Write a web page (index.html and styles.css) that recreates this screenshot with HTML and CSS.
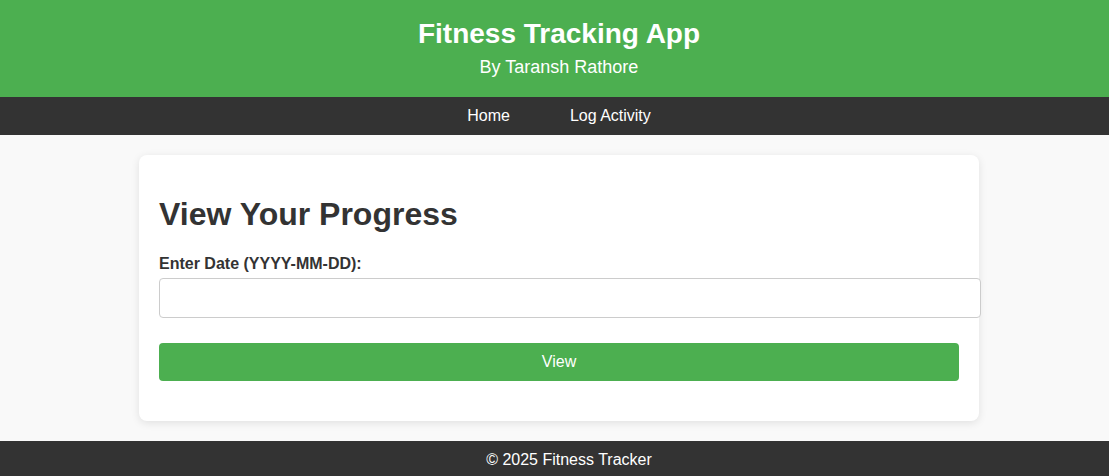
FILE: index.html
```html
<!DOCTYPE html>
<html>
<head>
<meta charset="utf-8">
<title>Fitness Tracking App</title>
<link rel="stylesheet" href="styles.css">
</head>
<body>
<header class="site-header">
  <h1 class="site-title">Fitness Tracking App</h1>
  <p class="site-sub">By Taransh Rathore</p>
</header>
<nav class="site-nav">
  <a href="#" class="nav-link">Home</a>
  <a href="#" class="nav-link">Log Activity</a>
</nav>
<main class="container">
  <h2 class="card-title">View Your Progress</h2>
  <form class="form">
    <label class="form-label" for="date">Enter Date (YYYY-MM-DD):</label>
    <input class="form-input" id="date" type="text">
    <button class="form-btn" type="button">View</button>
  </form>
</main>
<footer class="site-footer">&copy; 2025 Fitness Tracker</footer>
</body>
</html>
```
FILE: styles.css
```css
html {
  overflow-x: hidden;
}
html, body {
  margin: 0;
  padding: 0;
}
body {
  min-width: 1118px;
  font-family: "Liberation Sans", Arial, sans-serif;
  background: #f9f9f9;
  color: #333;
}
.site-header {
  background: #4caf50;
  color: #fff;
  text-align: center;
  padding: 18px 20px 19px;
}
.site-title {
  margin: 0;
  font-size: 28px;
  font-weight: bold;
}
.site-sub {
  margin: 7px 0 0;
  font-size: 18px;
}
.site-nav {
  background: #333;
  display: flex;
  justify-content: center;
  gap: 60px;
  padding: 10px 0;
}
.nav-link {
  color: #fff;
  text-decoration: none;
  font-size: 16px;
}
.container {
  width: 800px;
  margin: 20px auto;
  padding: 20px;
  background: #fff;
  border-radius: 8px;
  box-shadow: 0 2px 8px rgba(0,0,0,0.1);
}
.card-title {
  font-size: 32px;
  margin: 21px 0 22px;
  color: #333;
}
.form {
  display: flex;
  flex-direction: column;
  align-items: flex-start;
}
.form-label {
  font-weight: bold;
  font-size: 16px;
  margin-bottom: 5px;
}
.form-input {
  width: 100%;
  padding: 10px;
  font-size: 16px;
  border: 1px solid #ccc;
  border-radius: 4px;
  margin: 0 0 25px;
  font-family: inherit;
  box-sizing: content-box;
  height: 18px;
}
.form-btn {
  width: 100%;
  background: #4caf50;
  color: #fff;
  border: none;
  border-radius: 4px;
  padding: 10px;
  font-size: 16px;
  font-family: inherit;
  margin-bottom: 20px;
}
.site-footer {
  background: #333;
  color: #fff;
  text-align: center;
  padding: 10px 0 10px 20px;
  font-size: 16px;
}
```
